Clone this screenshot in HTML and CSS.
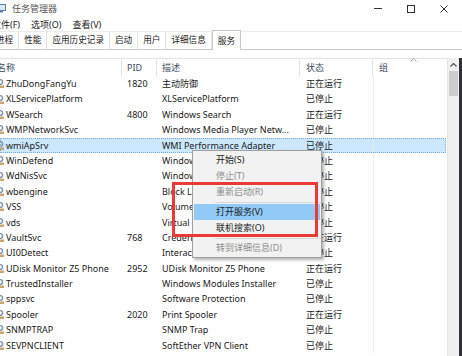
FILE: index.html
```html
<!DOCTYPE html>
<html lang="zh-CN">
<head>
    <meta charset="UTF-8">
    <title>任务管理器</title>
    <link rel="stylesheet" href="styles.css">
</head>
<body>
    <svg width="0" height="0" class="defs">
        <symbol id="svc" viewBox="0 0 8 11">
            <circle cx="3.2" cy="4" r="2.4" fill="none" stroke="#7f94ad" stroke-width="1.4"/>
            <rect x="1.5" y="7.5" width="5.5" height="2.5" fill="#c8a572"/>
        </symbol>
    </svg>

    <div class="window">
        <!-- Barra de título -->
        <div class="titlebar">
            <svg class="app-icon" viewBox="0 0 9 9" width="9" height="9">
                <rect x="0.5" y="0.5" width="8" height="6" fill="#dbe8f5" stroke="#5b7fa6"/>
                <rect x="3" y="7" width="3" height="1.5" fill="#5b7fa6"/>
            </svg>
            <span class="title">任务管理器</span>
            <div class="controls">
                <span class="ctl"><span class="ctl-min"></span></span>
                <span class="ctl"><span class="ctl-max"></span></span>
                <span class="ctl">
                    <svg viewBox="0 0 8 8" width="8" height="8"><path d="M0.5 0.5L7.5 7.5M7.5 0.5L0.5 7.5" stroke="#333" stroke-width="1"/></svg>
                </span>
            </div>
        </div>

        <div class="menubar">
            <span>文件(F)</span>
            <span>选项(O)</span>
            <span>查看(V)</span>
        </div>

        <div class="tabs">
            <span class="tab">进程</span>
            <span class="tab">性能</span>
            <span class="tab">应用历史记录</span>
            <span class="tab">启动</span>
            <span class="tab">用户</span>
            <span class="tab">详细信息</span>
            <span class="tab active">服务</span>
        </div>

        <div class="main">
            <div class="list">
                <div class="row header">
                    <span class="c-name">名称</span>
                    <span class="c-pid">PID</span>
                    <span class="c-desc">描述</span>
                    <span class="c-status">状态</span>
                    <span class="c-group">组
                        <svg class="sort" viewBox="0 0 7 4" width="7" height="4"><path d="M0.5 3.5L3.5 0.5L6.5 3.5" fill="none" stroke="#9aa4b0"/></svg>
                    </span>
                </div>

                <div class="row"><span class="c-name"><svg class="svc"><use href="#svc"/></svg>ZhuDongFangYu</span><span class="c-pid">1820</span><span class="c-desc">主动防御</span><span class="c-status">正在运行</span><span class="c-group"></span></div>
                <div class="row"><span class="c-name"><svg class="svc"><use href="#svc"/></svg>XLServicePlatform</span><span class="c-pid"></span><span class="c-desc">XLServicePlatform</span><span class="c-status">已停止</span><span class="c-group"></span></div>
                <div class="row"><span class="c-name"><svg class="svc"><use href="#svc"/></svg>WSearch</span><span class="c-pid">4800</span><span class="c-desc">Windows Search</span><span class="c-status">正在运行</span><span class="c-group"></span></div>
                <div class="row"><span class="c-name"><svg class="svc"><use href="#svc"/></svg>WMPNetworkSvc</span><span class="c-pid"></span><span class="c-desc">Windows Media Player Netw...</span><span class="c-status">已停止</span><span class="c-group"></span></div>
                <div class="row selected"><span class="c-name"><svg class="svc"><use href="#svc"/></svg>wmiApSrv</span><span class="c-pid"></span><span class="c-desc">WMI Performance Adapter</span><span class="c-status">已停止</span><span class="c-group"></span></div>
                <div class="row"><span class="c-name"><svg class="svc"><use href="#svc"/></svg>WinDefend</span><span class="c-pid"></span><span class="c-desc">Windows Defender Service</span><span class="c-status">已停止</span><span class="c-group"></span></div>
                <div class="row"><span class="c-name"><svg class="svc"><use href="#svc"/></svg>WdNisSvc</span><span class="c-pid"></span><span class="c-desc">Windows Defender Network...</span><span class="c-status">已停止</span><span class="c-group"></span></div>
                <div class="row"><span class="c-name"><svg class="svc"><use href="#svc"/></svg>wbengine</span><span class="c-pid"></span><span class="c-desc">Block Level Backup Engine...</span><span class="c-status">已停止</span><span class="c-group"></span></div>
                <div class="row"><span class="c-name"><svg class="svc"><use href="#svc"/></svg>VSS</span><span class="c-pid"></span><span class="c-desc">Volume Shadow Copy</span><span class="c-status">已停止</span><span class="c-group"></span></div>
                <div class="row"><span class="c-name"><svg class="svc"><use href="#svc"/></svg>vds</span><span class="c-pid"></span><span class="c-desc">Virtual Disk</span><span class="c-status">已停止</span><span class="c-group"></span></div>
                <div class="row"><span class="c-name"><svg class="svc"><use href="#svc"/></svg>VaultSvc</span><span class="c-pid">768</span><span class="c-desc">Credential Manager</span><span class="c-status">正在运行</span><span class="c-group"></span></div>
                <div class="row"><span class="c-name"><svg class="svc"><use href="#svc"/></svg>UI0Detect</span><span class="c-pid"></span><span class="c-desc">Interactive Services Detection</span><span class="c-status">已停止</span><span class="c-group"></span></div>
                <div class="row"><span class="c-name"><svg class="svc"><use href="#svc"/></svg>UDisk Monitor Z5 Phone</span><span class="c-pid">2952</span><span class="c-desc">UDisk Monitor Z5 Phone</span><span class="c-status">正在运行</span><span class="c-group"></span></div>
                <div class="row"><span class="c-name"><svg class="svc"><use href="#svc"/></svg>TrustedInstaller</span><span class="c-pid"></span><span class="c-desc">Windows Modules Installer</span><span class="c-status">已停止</span><span class="c-group"></span></div>
                <div class="row"><span class="c-name"><svg class="svc"><use href="#svc"/></svg>sppsvc</span><span class="c-pid"></span><span class="c-desc">Software Protection</span><span class="c-status">已停止</span><span class="c-group"></span></div>
                <div class="row"><span class="c-name"><svg class="svc"><use href="#svc"/></svg>Spooler</span><span class="c-pid">2020</span><span class="c-desc">Print Spooler</span><span class="c-status">正在运行</span><span class="c-group"></span></div>
                <div class="row"><span class="c-name"><svg class="svc"><use href="#svc"/></svg>SNMPTRAP</span><span class="c-pid"></span><span class="c-desc">SNMP Trap</span><span class="c-status">已停止</span><span class="c-group"></span></div>
                <div class="row"><span class="c-name"><svg class="svc"><use href="#svc"/></svg>SEVPNCLIENT</span><span class="c-pid"></span><span class="c-desc">SoftEther VPN Client</span><span class="c-status">已停止</span><span class="c-group"></span></div>
            </div>

            <div class="scrollbar">
                <div class="scroll-up">
                    <svg viewBox="0 0 7 4" width="7" height="4"><path d="M0.5 3.5L3.5 0.5L6.5 3.5" fill="none" stroke="#555" stroke-width="1.2"/></svg>
                </div>
                <div class="scroll-thumb"></div>
            </div>
            <div class="edge"></div>
        </div>

        <!-- Menu de contexto -->
        <div class="context-menu">
            <div class="item">开始(S)</div>
            <div class="item disabled">停止(T)</div>
            <div class="item disabled">重新启动(R)</div>
            <div class="separator"></div>
            <div class="item hover">打开服务(V)</div>
            <div class="item">联机搜索(O)</div>
            <div class="separator"></div>
            <div class="item disabled">转到详细信息(D)</div>
        </div>

        <!-- Marcação em vermelho -->
        <div class="mark"></div>
    </div>
</body>
</html>
```

FILE: styles.css
```css
* {
    margin: 0;
    padding: 0;
    box-sizing: border-box;
}

body {
    width: 462px;
    height: 356px;
    overflow: hidden;
    background-color: #fff;
    font-family: "Noto Sans", "Noto Sans CJK SC", sans-serif;
    font-size: 9px;
    color: #1a1a1a;
}

.defs {
    position: absolute;
}

.window {
    position: relative;
    height: 356px;
    overflow: hidden;
}

/* Barra de título */
.titlebar {
    height: 17px;
    display: flex;
    align-items: center;
}

.app-icon {
    margin-left: -3px;
}

.title {
    margin-left: 6px;
    color: #555;
}

.controls {
    margin-left: auto;
    margin-right: 2px;
    display: flex;
    height: 100%;
}

.ctl {
    width: 33px;
    display: flex;
    align-items: center;
    justify-content: center;
}

.ctl-min {
    width: 8px;
    height: 1px;
    background-color: #333;
}

.ctl-max {
    width: 8px;
    height: 8px;
    border: 1px solid #333;
}

/* Menu */
.menubar {
    height: 14px;
    display: flex;
    align-items: center;
    gap: 11px;
    margin-left: -8px;
    color: #222;
}

/* Abas */
.tabs {
    height: 19px;
    display: flex;
    margin-left: -9px;
    border-top: 1px solid #ececec;
    border-bottom: 1px solid #c9c9c9;
}

.tab {
    padding: 0 5px;
    font-size: 8.6px;
    line-height: 17px;
    border-right: 1px solid #e2e2e2;
    color: #222;
}

.tab.active {
    margin-top: -2px;
    height: 20px;
    line-height: 20px;
    background-color: #fff;
    border: 1px solid #c9c9c9;
    border-bottom: none;
}

/* Lista de serviços */
.main {
    display: flex;
    margin-top: 8px;
    height: 298px;
}

.list {
    width: 447px;
    overflow: hidden;
}

.row {
    display: grid;
    grid-template-columns: 122px 35px 143px 73px 74px;
    height: 15.4px;
    line-height: 15.4px;
    white-space: nowrap;
}

.row > span {
    overflow: hidden;
}

.row.header {
    height: 18px;
    line-height: 17px;
    border-top: 1px solid #e3e3e3;
    color: #3e4c5e;
}

.row.header > span {
    border-right: 1px solid #e3e3e3;
}

.row.header .c-name {
    text-indent: -3px;
}

.row.header .c-group {
    position: relative;
    border-right: none;
    overflow: visible;
}

.sort {
    position: absolute;
    left: 37px;
    top: -1px;
}

.c-name {
    display: flex;
    align-items: center;
}

.svc {
    width: 8px;
    height: 11px;
    margin-left: -3px;
    margin-right: 1px;
    flex-shrink: 0;
}

.c-pid {
    padding-left: 5px;
}

.c-desc {
    padding-left: 5px;
}

.c-status {
    padding-left: 6px;
}

.c-group {
    padding-left: 6px;
    border-left: 1px solid #ececec;
}

.row.header .c-group {
    border-left: none;
}

.row.selected {
    background-color: #cce8ff;
    outline: 1px dotted #7aa9d6;
    outline-offset: -1px;
    width: 446px;
}

/* Barra de rolagem */
.scrollbar {
    width: 12px;
    background-color: #f0f0f0;
    border-left: 1px solid #e6e6e6;
}

.scroll-up {
    height: 13px;
    display: flex;
    align-items: center;
    justify-content: center;
}

.scroll-thumb {
    margin: 0 1px;
    height: 25px;
    background-color: #cdcdcd;
}

.edge {
    width: 3px;
    background-color: #2f3137;
}

/* Menu de contexto */
.context-menu {
    position: absolute;
    left: 192px;
    top: 150px;
    width: 130px;
    padding: 1px 0;
    background-color: #f2f2f2;
    border: 1px solid #a0a0a0;
    box-shadow: 2px 2px 3px rgba(0, 0, 0, 0.3);
    color: #1a1a1a;
}

.item {
    height: 16px;
    line-height: 16px;
    padding-left: 23px;
}

.item.disabled {
    color: #8d8d8d;
}

.item.hover {
    margin: 0 1px;
    padding-left: 22px;
    background-color: #91c9f7;
}

.separator {
    height: 4px;
    margin-left: 22px;
    border-bottom: 1px solid #d7d7d7;
    transform: translateY(-1px);
}

.mark {
    position: absolute;
    left: 172px;
    top: 182px;
    width: 146px;
    height: 55px;
    border: 3px solid #ea3a37;
}
```
